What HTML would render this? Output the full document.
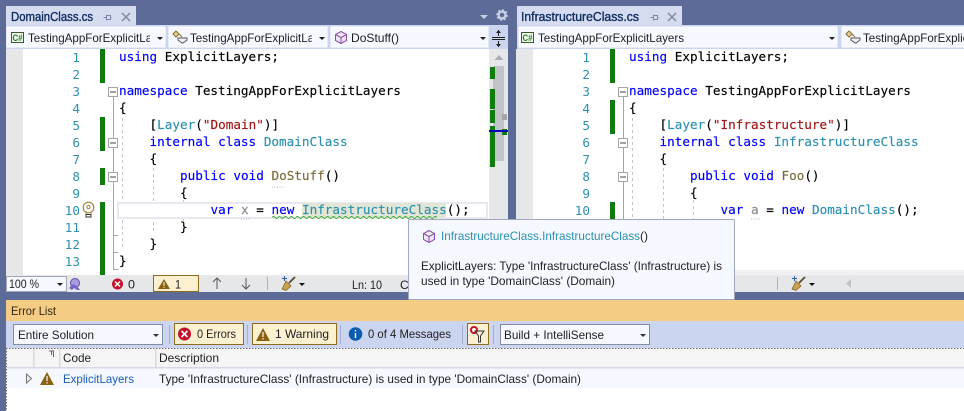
<!DOCTYPE html>
<html><head><meta charset="utf-8"><style>
html,body{margin:0;padding:0;width:964px;height:411px;overflow:hidden;background:#5d6b99}
svg{display:block}
.c{font-family:"DejaVu Sans Mono","Liberation Mono",monospace;font-size:12.66px;fill:#000;stroke:#000;stroke-width:.15}
.k{fill:#0000ff;stroke:#0000ff}.t{fill:#2b91af;stroke:#2b91af}.s{fill:#a31515;stroke:#a31515}.m{fill:#7a6a3a;stroke:#7a6a3a}.v{fill:#8a8a8a;stroke:#8a8a8a}
.n{font-family:"DejaVu Sans Mono","Liberation Mono",monospace;font-size:12.66px;fill:#2b91af;text-anchor:end}
.u{font-family:"Liberation Sans",sans-serif;font-size:12px;fill:#1e1e1e}
.h{font-size:12.5px;fill:#0e2a5e;stroke:#0e2a5e;stroke-width:.35}
</style></head><body>
<svg width="964" height="411" viewBox="0 0 964 411" xmlns="http://www.w3.org/2000/svg" xml:space="preserve">
<defs>
<clipPath id="lc"><rect x="6" y="49" width="483" height="226"/></clipPath>
<clipPath id="cb1"><rect x="26" y="27" width="124" height="20"/></clipPath>
<clipPath id="cb2"><rect x="188" y="27" width="124" height="20"/></clipPath>
<clipPath id="cb4"><rect x="860" y="27" width="104" height="20"/></clipPath>
</defs>
<rect width="964" height="411" fill="#5d6b99"/>

<!-- LEFT PANEL -->
<rect x="6" y="6" width="130" height="20" fill="#d5dcef"/>
<text class="u h" x="11" y="21" textLength="82" lengthAdjust="spacingAndGlyphs">DomainClass.cs</text>
<path d="M103.500 17.500h3M106.500 14.500v6M106.500 15.500h4v4h-4M110.500 17.500h1" fill="none" stroke="#7f8aa8"/>
<path d="M122 13l8 8M130 13l-8 8" stroke="#7f8aa8" stroke-width="1.500"/>
<path d="M480 15h8l-4 4z" fill="#c8cfe4"/>
<circle cx="502" cy="15" r="3.500" fill="none" stroke="#c8cfe4" stroke-width="2.500"/>
<circle cx="502" cy="15" r="5" fill="none" stroke="#c8cfe4" stroke-width="1.500" stroke-dasharray="2 1.900"/>

<rect x="6" y="25" width="502" height="24" fill="#ccd5f0"/>
<rect x="7" y="27" width="158" height="20" fill="#f5f8ff" stroke="#fff"/>
<rect x="11.500" y="32.500" width="12" height="10" fill="#f4f8f0" stroke="#3a5a2a"/>
<text x="12.500" y="41" font-family="Liberation Sans,sans-serif" font-size="9" font-weight="bold" fill="#1f7a1f" textLength="10" lengthAdjust="spacingAndGlyphs">C#</text>
<text class="u" x="28" y="42" clip-path="url(#cb1)" textLength="146" lengthAdjust="spacingAndGlyphs">TestingAppForExplicitLayers</text>
<path d="M157 37h6l-3 3z" fill="#1e1e1e"/>

<rect x="169" y="27" width="158" height="20" fill="#f5f8ff" stroke="#fff"/>
<path d="M173 34l3-3 3 3-3 3zM179 34l3 3" fill="#e8d49a" stroke="#8a6d2c"/>
<path d="M178 38h9v2l-4 3-1 0-4-3z" fill="#f0f0f0" stroke="#555"/>
<text class="u" x="190" y="42" clip-path="url(#cb2)" textLength="146" lengthAdjust="spacingAndGlyphs">TestingAppForExplicitLayers</text>
<path d="M319 37h6l-3 3z" fill="#1e1e1e"/>

<rect x="331" y="27" width="157" height="20" fill="#f5f8ff" stroke="#fff"/>
<path d="M341 31.500l5.500 3v6l-5.500 3-5.500-3v-6zM335.500 34.500l5.500 3 5.500-3M341 37.500v6" fill="#efe6f5" stroke="#8a4fa8"/>
<text class="u" x="351" y="42" textLength="48" lengthAdjust="spacingAndGlyphs">DoStuff()</text>
<path d="M480 37h6l-3 3z" fill="#1e1e1e"/>
<path d="M492 37.500h13M492 39.500h13M498.500 30v6M498.500 41v6" stroke="#1e1e1e"/>
<path d="M496 33l2.500-3 2.500 3zM496 44l2.500 3 2.500-3z" fill="#1e1e1e"/>

<rect x="6" y="49" width="502" height="226" fill="#fff"/>
<rect x="6" y="49" width="17" height="226" fill="#e6e7e8"/>
<rect x="489" y="49" width="19" height="226" fill="#e6e7e8"/>
<path d="M494.500 60l4.500-5 4.500 5z" fill="#a9adb5"/>
<rect x="493" y="66" width="11" height="95" fill="#c2c3c9"/>
<g fill="#107c10">
<rect x="490" y="67" width="5" height="12"/><rect x="490" y="89" width="5" height="20"/><rect x="490" y="110" width="5" height="13"/><rect x="490" y="126" width="5" height="41"/>
<rect x="502" y="129" width="5" height="6"/>
</g>
<rect x="502" y="114" width="5" height="6" fill="#a5a5a5"/>
<rect x="489" y="130" width="19" height="2" fill="#0000c0"/>

<!-- green change bars -->
<g fill="#107c10">
<rect x="100" y="49" width="5" height="34"/><rect x="100" y="117" width="5" height="34"/><rect x="100" y="168" width="5" height="17"/><rect x="100" y="202" width="5" height="73"/>
</g>
<!-- line numbers -->
<g>
<text class="n" x="80" y="62">1</text><text class="n" x="80" y="79">2</text><text class="n" x="80" y="96">3</text><text class="n" x="80" y="113">4</text><text class="n" x="80" y="130">5</text><text class="n" x="80" y="147">6</text><text class="n" x="80" y="164">7</text><text class="n" x="80" y="181">8</text><text class="n" x="80" y="198">9</text><text class="n" x="80" y="215">10</text><text class="n" x="80" y="232">11</text><text class="n" x="80" y="249">12</text><text class="n" x="80" y="266">13</text>
</g>
<!-- outline -->
<path d="M113.500 96v173.500h5M113.500 235.500h5M113.500 252.500h5" fill="none" stroke="#a5a5a5"/>
<g fill="#fff" stroke="#a5a5a5">
<rect x="108.500" y="87.500" width="9" height="9"/><rect x="108.500" y="138.500" width="9" height="9"/><rect x="108.500" y="172.500" width="9" height="9"/>
</g>
<path d="M110 92h6M110 143h6M110 177h6" stroke="#444"/>
<!-- guides -->
<path d="M122.500 106v143M153.500 168v65M183.500 200v32" stroke="#c4c4c4" stroke-dasharray="3 3" fill="none"/>
<!-- current line -->
<rect x="118" y="203" width="369" height="15" fill="#fff" stroke="#e8e8f0" stroke-width="2"/>
<rect x="302" y="203" width="144" height="15" fill="#e2e6d6"/>
<path d="M272 217.500q1.500-2 3 0t3 0 3 0 3 0 3 0 3 0 3 0 3 0 3 0 3 0 3 0 3 0 3 0 3 0 3 0 3 0 3 0 3 0 3 0 3 0 3 0 3 0 3 0 3 0 3 0 3 0 3 0 3 0 3 0 3 0 3 0 3 0 3 0 3 0 3 0 3 0 3 0 3 0 3 0 3 0 3 0 3 0 3 0 3 0 3 0 3 0 3 0 3 0 3 0 3 0 3 0 3 0 3 0 3 0 3 0" fill="none" stroke="#3aa83a"/>
<path d="M241 219h9M272 187h11" stroke="#b0b0b0" stroke-dasharray="1 1.500"/>
<!-- bulb -->
<circle cx="88.500" cy="207.500" r="5.300" fill="#fff" stroke="#a8833a" stroke-width="1.200"/>
<circle cx="88.500" cy="207" r="1.600" fill="none" stroke="#a8833a"/>
<path d="M86 212v3h5v-3" fill="none" stroke="#a8833a"/>
<rect x="86" y="214.500" width="5" height="2.500" fill="#fff" stroke="#333"/>
<!-- left code -->
<g clip-path="url(#lc)">
<text class="c" x="119" y="61"><tspan class="k">using</tspan> ExplicitLayers;</text>
<text class="c" x="119" y="95"><tspan class="k">namespace</tspan> TestingAppForExplicitLayers</text>
<text class="c" x="119" y="112">{</text>
<text class="c" x="149.500" y="129">[<tspan class="t">Layer</tspan>(<tspan class="s">"Domain"</tspan>)]</text>
<text class="c" x="149.500" y="146"><tspan class="k">internal class</tspan> <tspan class="t">DomainClass</tspan></text>
<text class="c" x="149.500" y="163">{</text>
<text class="c" x="180" y="180"><tspan class="k">public void</tspan> <tspan class="m">DoStuff</tspan>()</text>
<text class="c" x="180" y="197">{</text>
<text class="c" x="210.500" y="214"><tspan class="k">var</tspan> <tspan class="v">x</tspan> = <tspan class="k">new</tspan> <tspan class="t">InfrastructureClass</tspan>();</text>
<text class="c" x="180" y="231">}</text>
<text class="c" x="149.500" y="248">}</text>
<text class="c" x="119" y="265">}</text>
</g>

<!-- LEFT STATUS -->
<rect x="6" y="275" width="502" height="17" fill="#e6e7e8"/>
<rect x="6.500" y="276.500" width="60" height="15" fill="#f5f8ff" stroke="#a0a6b8"/>
<text class="u" x="9" y="288" textLength="30" lengthAdjust="spacingAndGlyphs">100 %</text>
<path d="M57 283h6l-3 3z" fill="#1e1e1e"/>
<circle cx="75" cy="283" r="4.500" fill="#a99cdc" stroke="#5f4aa8"/>
<path d="M69 288l4-4 4 2 3 4h-3l-3-2-2 2z" fill="#7a66c8"/>
<circle cx="117.500" cy="284" r="5.500" fill="#c5102c"/>
<path d="M115 281.500l5 5M120 281.500l-5 5" stroke="#fff" stroke-width="1.500"/>
<text class="u" x="128" y="288.500" textLength="7" lengthAdjust="spacingAndGlyphs">0</text>
<rect x="153.500" y="275.500" width="45" height="16" fill="#fdf0d0" stroke="#8e6a1c"/>
<path d="M158 289l6-10 6 10z" fill="#8a6110"/>
<path d="M164 282v4M164 287v1" stroke="#fff"/>
<text class="u" x="175" y="288.500" textLength="6" lengthAdjust="spacingAndGlyphs">1</text>
<path d="M217 289v-11M213 282l4-4 4 4M246 278v11M242 285l4 4 4-4" fill="none" stroke="#555"/>
<rect x="267" y="277" width="1" height="13" fill="#b0b0b0"/>
<path d="M295 277l-6 6" stroke="#5a4a28" stroke-width="1.800"/>
<path d="M286 281l5 5-5 4.500-4-1.500z" fill="#c9a24a" stroke="#7a5f20" stroke-width=".7"/>
<path d="M282 278.500h5M284.500 276v5" stroke="#2a5aa8"/>
<path d="M299 283h6l-3 3z" fill="#111"/>
<text class="u" x="352" y="289" textLength="30" lengthAdjust="spacingAndGlyphs">Ln: 10</text>
<text class="u" x="400" y="289">C</text>

<!-- RIGHT PANEL -->
<rect x="517" y="6" width="165" height="20" fill="#d5dcef"/>
<text class="u h" x="521" y="21" textLength="118" lengthAdjust="spacingAndGlyphs">InfrastructureClass.cs</text>
<path d="M650.500 17.500h3M653.500 14.500v6M653.500 15.500h4v4h-4M657.500 17.500h1" fill="none" stroke="#7f8aa8"/>
<path d="M668 13l8 8M676 13l-8 8" stroke="#7f8aa8" stroke-width="1.500"/>
<rect x="517" y="25" width="447" height="24" fill="#ccd5f0"/>
<rect x="519" y="27" width="318" height="20" fill="#f5f8ff" stroke="#fff"/>
<rect x="521.500" y="32.500" width="12" height="10" fill="#f4f8f0" stroke="#3a5a2a"/>
<text x="522.500" y="41" font-family="Liberation Sans,sans-serif" font-size="9" font-weight="bold" fill="#1f7a1f" textLength="10" lengthAdjust="spacingAndGlyphs">C#</text>
<text class="u" x="538" y="42" textLength="146" lengthAdjust="spacingAndGlyphs">TestingAppForExplicitLayers</text>
<path d="M829 37h6l-3 3z" fill="#1e1e1e"/>
<rect x="842" y="27" width="124" height="20" fill="#f5f8ff" stroke="#fff"/>
<path d="M846 34l3-3 3 3-3 3zM852 34l3 3" fill="#e8d49a" stroke="#8a6d2c"/>
<path d="M851 38h9v2l-4 3-1 0-4-3z" fill="#f0f0f0" stroke="#555"/>
<text class="u" x="863" y="42" clip-path="url(#cb4)" textLength="146" lengthAdjust="spacingAndGlyphs">TestingAppForExplicitLayers</text>

<rect x="516" y="49" width="448" height="226" fill="#fff"/>
<rect x="516" y="49" width="17" height="226" fill="#e6e7e8"/>
<rect x="533" y="270" width="431" height="5" fill="#f1f1f3"/>
<g fill="#107c10">
<rect x="610" y="49" width="5" height="34"/><rect x="610" y="100" width="5" height="34"/><rect x="610" y="202" width="5" height="17"/>
</g>
<g>
<text class="n" x="590" y="62">1</text><text class="n" x="590" y="79">2</text><text class="n" x="590" y="96">3</text><text class="n" x="590" y="113">4</text><text class="n" x="590" y="130">5</text><text class="n" x="590" y="147">6</text><text class="n" x="590" y="164">7</text><text class="n" x="590" y="181">8</text><text class="n" x="590" y="198">9</text><text class="n" x="590" y="215">10</text>
</g>
<path d="M623.500 96v125" fill="none" stroke="#a5a5a5"/>
<g fill="#fff" stroke="#a5a5a5">
<rect x="618.500" y="87.500" width="9" height="9"/><rect x="618.500" y="138.500" width="9" height="9"/><rect x="618.500" y="172.500" width="9" height="9"/>
</g>
<path d="M620 92h6M620 143h6M620 177h6" stroke="#444"/>
<path d="M632.500 106v125M663.500 168v65M693.500 200v32" stroke="#c4c4c4" stroke-dasharray="3 3" fill="none"/>
<path d="M751 219h9" stroke="#b0b0b0" stroke-dasharray="1 1.500"/>
<text class="c" x="629" y="61"><tspan class="k">using</tspan> ExplicitLayers;</text>
<text class="c" x="629" y="95"><tspan class="k">namespace</tspan> TestingAppForExplicitLayers</text>
<text class="c" x="629" y="112">{</text>
<text class="c" x="659.500" y="129">[<tspan class="t">Layer</tspan>(<tspan class="s">"Infrastructure"</tspan>)]</text>
<text class="c" x="659.500" y="146"><tspan class="k">internal class</tspan> <tspan class="t">InfrastructureClass</tspan></text>
<text class="c" x="659.500" y="163">{</text>
<text class="c" x="690" y="180"><tspan class="k">public void</tspan> <tspan class="m">Foo</tspan>()</text>
<text class="c" x="690" y="197">{</text>
<text class="c" x="720.500" y="214"><tspan class="k">var</tspan> <tspan class="v">a</tspan> = <tspan class="k">new</tspan> <tspan class="t">DomainClass</tspan>();</text>

<!-- RIGHT STATUS -->
<rect x="516" y="275" width="448" height="17" fill="#e6e7e8"/>
<rect x="777" y="277" width="1" height="13" fill="#b0b0b0"/>
<path d="M805 277l-6 6" stroke="#5a4a28" stroke-width="1.800"/>
<path d="M796 281l5 5-5 4.500-4-1.500z" fill="#c9a24a" stroke="#7a5f20" stroke-width=".7"/>
<path d="M792 278.500h5M794.500 276v5" stroke="#2a5aa8"/>
<path d="M809 283h6l-3 3z" fill="#111"/>
<path d="M851 279v9l-5-4.500z" fill="#c2c3c9"/>

<!-- ERROR LIST -->
<rect x="6" y="300" width="958" height="21" fill="#f5cc84"/>
<text class="u" x="11" y="315" style="fill:#2e2410" textLength="45" lengthAdjust="spacingAndGlyphs">Error List</text>
<rect x="6" y="321" width="958" height="27" fill="#ccd5f0"/>
<rect x="13.500" y="324.500" width="149" height="20" fill="#f5f8ff" stroke="#858a9c"/>
<text class="u" x="18" y="339" textLength="76" lengthAdjust="spacingAndGlyphs">Entire Solution</text>
<path d="M153 334h6l-3 3z" fill="#333"/>
<rect x="169" y="325" width="1" height="19" fill="#a5afcc"/>
<rect x="174.500" y="323.500" width="69" height="21" fill="#fdf0d0" stroke="#8e6a1c"/>
<circle cx="184.500" cy="334" r="6.500" fill="#c5102c"/>
<path d="M181.500 331l6 6M187.500 331l-6 6" stroke="#fff" stroke-width="1.600"/>
<text class="u" x="197" y="338" textLength="39" lengthAdjust="spacingAndGlyphs">0 Errors</text>
<rect x="247" y="325" width="1" height="19" fill="#a5afcc"/>
<rect x="252.500" y="323.500" width="84" height="21" fill="#fdf0d0" stroke="#8e6a1c"/>
<path d="M256 341l7-13 7 13z" fill="#8a6110"/>
<path d="M263 332v5M263 338v1.500" stroke="#fff" stroke-width="1.200"/>
<text class="u" x="275" y="338" textLength="54" lengthAdjust="spacingAndGlyphs">1 Warning</text>
<rect x="340" y="325" width="1" height="19" fill="#a5afcc"/>
<circle cx="355.500" cy="334" r="6.800" fill="#0b5cad"/>
<path d="M355.500 330v1.500M355.500 333v5" stroke="#fff" stroke-width="1.400"/>
<text class="u" x="368" y="338" textLength="83" lengthAdjust="spacingAndGlyphs">0 of 4 Messages</text>
<rect x="462" y="325" width="1" height="19" fill="#a5afcc"/>
<rect x="467.500" y="323.500" width="21" height="21" fill="#fdf0d0" stroke="#8e6a1c"/>
<circle cx="474" cy="330" r="3" fill="#fff" stroke="#c5102c" stroke-width="2"/>
<path d="M475 331h9l-3.500 5v6h-2v-6z" fill="none" stroke="#333"/>
<rect x="493" y="325" width="1" height="19" fill="#a5afcc"/>
<rect x="500.500" y="324.500" width="149" height="20" fill="#f5f8ff" stroke="#858a9c"/>
<text class="u" x="504" y="339" textLength="100" lengthAdjust="spacingAndGlyphs">Build + IntelliSense</text>
<path d="M640 334h6l-3 3z" fill="#333"/>

<rect x="6" y="348" width="958" height="63" fill="#fff"/>
<rect x="6" y="349" width="958" height="18" fill="#f5f5f5"/>
<path d="M6 348.500h958" stroke="#666" stroke-dasharray="1.500 1.500"/>
<path d="M6.500 348v63" stroke="#777" stroke-dasharray="1.500 1.500"/>
<rect x="6" y="367" width="958" height="1.500" fill="#d5d9e6"/>
<rect x="33" y="349" width="1.500" height="18" fill="#d5d9e6"/>
<rect x="59" y="349" width="1.500" height="18" fill="#d5d9e6"/>
<rect x="155" y="349" width="1.500" height="18" fill="#d5d9e6"/>
<path d="M49 351h5M51.500 351v4M53.500 351v6" stroke="#666"/>
<text class="u" x="63" y="362" textLength="28" lengthAdjust="spacingAndGlyphs">Code</text>
<text class="u" x="159" y="362" textLength="60" lengthAdjust="spacingAndGlyphs">Description</text>
<rect x="7" y="368.500" width="957" height="20" fill="#f5f8ff"/>
<path d="M26.500 374v9l5-4.500z" fill="#eee" stroke="#777"/>
<path d="M40 385l7-13 7 13z" fill="#8a6110"/>
<path d="M47 376v5M47 382v1.500" stroke="#fff" stroke-width="1.200"/>
<text class="u" x="63" y="383" style="fill:#1b5fb0" textLength="71" lengthAdjust="spacingAndGlyphs">ExplicitLayers</text>
<text class="u" x="159" y="383" textLength="422" lengthAdjust="spacingAndGlyphs">Type 'InfrastructureClass' (Infrastructure) is used in type 'DomainClass' (Domain)</text>

<!-- TOOLTIP -->
<rect x="408.500" y="219.500" width="326" height="80" rx="1" fill="#f5f8ff" stroke="#a0a8c0"/>
<path d="M429 230.500l5.500 3v6l-5.500 3-5.500-3v-6zM423.500 233.500l5.500 3 5.500-3M429 236.500v6" fill="#efe6f5" stroke="#8a4fa8"/>
<text class="u" x="441" y="240" style="fill:#2b91af" textLength="199" lengthAdjust="spacingAndGlyphs">InfrastructureClass.InfrastructureClass</text>
<text class="u" x="640" y="240" textLength="8" lengthAdjust="spacingAndGlyphs">()</text>
<text class="u" x="421" y="270" textLength="301" lengthAdjust="spacingAndGlyphs">ExplicitLayers: Type 'InfrastructureClass' (Infrastructure) is</text>
<text class="u" x="421" y="285" textLength="194" lengthAdjust="spacingAndGlyphs">used in type 'DomainClass' (Domain)</text>
</svg>
</body></html>
